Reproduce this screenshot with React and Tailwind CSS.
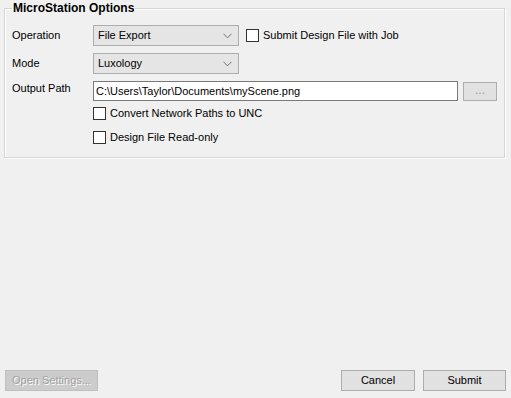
import React from "react";

function Chevron() {
  return (
    <svg width="9" height="6" viewBox="0 0 9 6" className="shrink-0">
      <path d="M0.5 0.8 L4.5 4.8 L8.5 0.8" fill="none" stroke="#707070" strokeWidth="1" />
    </svg>
  );
}

function Combo({ value }) {
  return (
    <div className="w-[146px] h-[21px] border border-[#adadad] bg-[#e5e5e5] flex items-center pl-[4px] pr-[6px] justify-between">
      <span className="text-[11px] text-black leading-none">{value}</span>
      <Chevron />
    </div>
  );
}

function Check({ label }) {
  return (
    <div className="flex items-center gap-[4px]">
      <div className="w-[13px] h-[13px] border border-[#333333] bg-white shrink-0" />
      <span className="text-[11px] text-black leading-none">{label}</span>
    </div>
  );
}

export default function App() {
  return (
    <div
      className="w-[511px] h-[398px] bg-[#f0f0f0] flex flex-col"
      style={{ fontFamily: '"Liberation Sans", Arial, sans-serif' }}
    >
      <fieldset className="mt-[1px] ml-[4px] w-[501px] h-[157px] border border-[#d5d5d5] shadow-[1px_1px_0_#ffffff,inset_1px_1px_0_#ffffff] pl-[7px] pr-0 pt-0 pb-0 m-0">
        <legend className="ml-0 px-[1px] text-[12px] font-bold leading-[15px] text-black">
          MicroStation Options
        </legend>
        <div className="flex flex-col pt-[9px]">
          <div className="flex items-center h-[21px]">
            <span className="w-[81px] text-[11px] leading-none">Operation</span>
            <Combo value="File Export" />
            <div className="ml-[7px]">
              <Check label="Submit Design File with Job" />
            </div>
          </div>
          <div className="flex items-center h-[21px] mt-[7px]">
            <span className="w-[81px] text-[11px] leading-none">Mode</span>
            <Combo value="Luxology" />
          </div>
          <div className="flex items-center h-[20px] mt-[7px]">
            <span className="w-[81px] text-[11px] leading-none self-start pt-[2px]">Output Path</span>
            <div className="w-[365px] h-[20px] border border-[#7a7a7a] bg-white flex items-center pl-[2px]">
              <span className="text-[11px] leading-none">C:\Users\Taylor\Documents\myScene.png</span>
            </div>
            <div className="ml-[5px] w-[34px] h-[19px] border border-[#adadad] bg-[#e1e1e1] flex items-center justify-center">
              <span className="text-[12px] leading-none text-[#9a9a9a] -mt-[2px]">...</span>
            </div>
          </div>
          <div className="ml-[81px] mt-[6px] h-[13px] flex items-center">
            <Check label="Convert Network Paths to UNC" />
          </div>
          <div className="ml-[81px] mt-[11px] h-[13px] flex items-center">
            <Check label="Design File Read-only" />
          </div>
        </div>
      </fieldset>
      <div className="flex-1" />
      <div className="flex items-center h-[21px] mb-[7px] pl-[5px] pr-[5px]">
        <div className="w-[93px] h-[21px] border border-[#bfbfbf] bg-[#cccccc] flex items-center justify-center">
          <span className="text-[11px] leading-none text-[#a0a0a0] [text-shadow:1px_1px_0_#ffffff]">Open Settings...</span>
        </div>
        <div className="flex-1" />
        <div className="w-[74px] h-[21px] border border-[#adadad] bg-[#e1e1e1] flex items-center justify-center">
          <span className="text-[11px] leading-none">Cancel</span>
        </div>
        <div className="ml-[8px] w-[83px] h-[21px] border border-[#adadad] bg-[#e1e1e1] flex items-center justify-center">
          <span className="text-[11px] leading-none">Submit</span>
        </div>
      </div>
    </div>
  );
}
